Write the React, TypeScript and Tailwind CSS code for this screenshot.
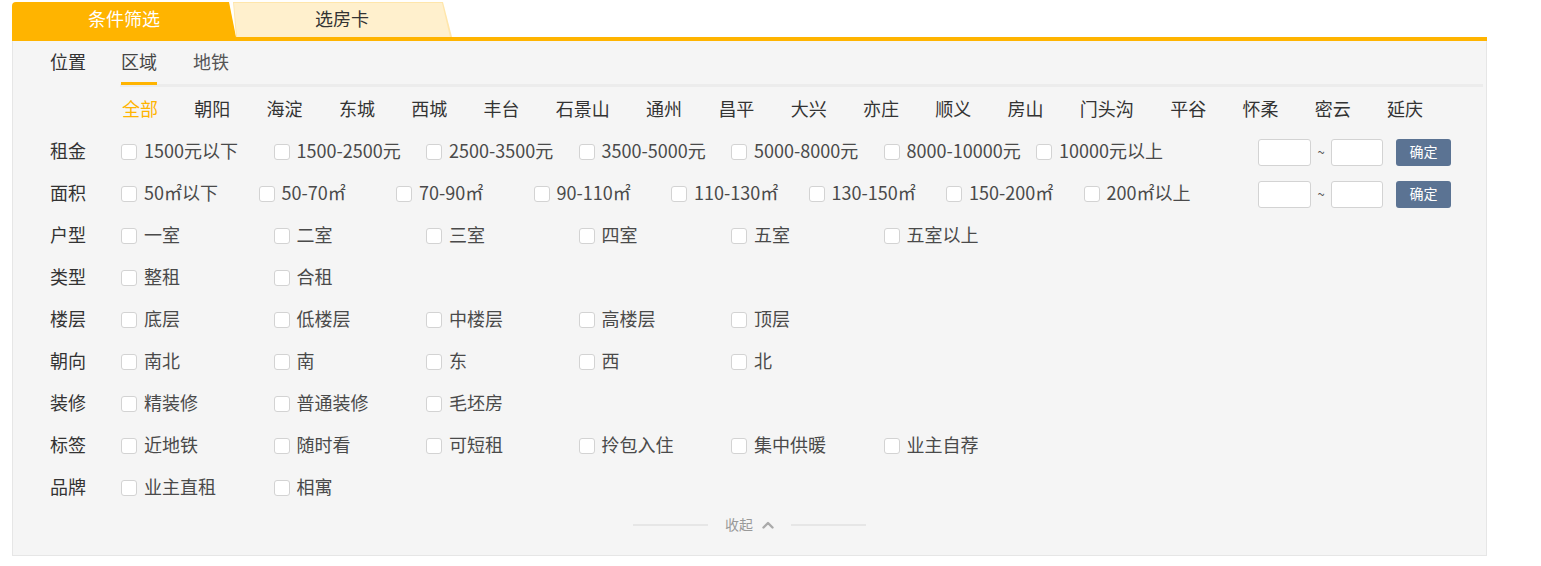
import React from "react";

const districts = ["全部","朝阳","海淀","东城","西城","丰台","石景山","通州","昌平","大兴","亦庄","顺义","房山","门头沟","平谷","怀柔","密云","延庆"];

type Row = { label: string; items: string[]; w: string; custom?: boolean };

const rows: Row[] = [
  { label: "租金", items: ["1500元以下","1500-2500元","2500-3500元","3500-5000元","5000-8000元","8000-10000元","10000元以上"], w: "w-[152.5px]", custom: true },
  { label: "面积", items: ["50㎡以下","50-70㎡","70-90㎡","90-110㎡","110-130㎡","130-150㎡","150-200㎡","200㎡以上"], w: "w-[137.5px]", custom: true },
  { label: "户型", items: ["一室","二室","三室","四室","五室","五室以上"], w: "w-[152.5px]" },
  { label: "类型", items: ["整租","合租"], w: "w-[152.5px]" },
  { label: "楼层", items: ["底层","低楼层","中楼层","高楼层","顶层"], w: "w-[152.5px]" },
  { label: "朝向", items: ["南北","南","东","西","北"], w: "w-[152.5px]" },
  { label: "装修", items: ["精装修","普通装修","毛坯房"], w: "w-[152.5px]" },
  { label: "标签", items: ["近地铁","随时看","可短租","拎包入住","集中供暖","业主自荐"], w: "w-[152.5px]" },
  { label: "品牌", items: ["业主直租","相寓"], w: "w-[152.5px]" },
];

export default function App() {
  return (
    <div className="w-[1541px] h-[566px] bg-white overflow-hidden text-[18px] text-[#333]" style={{ fontFamily: '"Noto Sans CJK SC", "Noto Sans", sans-serif' }}>
      <div className="ml-[12px] w-[1475px] pt-[2px]">
        {/* Tabs */}
        <div className="flex h-[35px]">
          <div className="w-[224px] h-[35px] bg-[#ffb400] rounded-tl-[4px] flex items-center justify-center text-white [clip-path:polygon(0_0,217px_0,224px_100%,0_100%)]">
            <span className="leading-[18px] pb-[3px]">条件筛选</span>
          </div>
          <div className="-ml-[4px] w-[220px] h-[35px] bg-[#ffe6ab] [clip-path:polygon(1px_0,211px_0,220px_100%,4px_100%)]">
            <div className="w-full h-full bg-[#fff0cd] flex items-center justify-center text-[#333] [clip-path:polygon(2px_1px,210px_1px,218px_100%,5px_100%)]">
              <span className="leading-[18px] pb-[3px]">选房卡</span>
            </div>
          </div>
        </div>
        <div className="h-[4px] bg-[#ffb400]" />
        {/* Panel */}
        <div className="bg-[#f5f5f5] border-x border-b border-[#e6e6e6] h-[515px] pl-[37px]">
          {/* Position row */}
          <div className="flex">
            <div className="w-[71px] h-[43px] flex items-center">
              <span className="leading-[18px] pb-[4px]">位置</span>
            </div>
            <div className="flex-1 flex flex-col">
              <div className="flex h-[43px] items-center">
                <div className="relative h-full flex items-center mr-[36px] text-[#444]">
                  <span className="leading-[18px] pb-[4px]">区域</span>
                  <span className="absolute left-0 right-0 bottom-[-1px] h-[3px] bg-[#ffb400]" />
                </div>
                <div className="h-full flex items-center text-[#555]">
                  <span className="leading-[18px] pb-[4px]">地铁</span>
                </div>
              </div>
              <div className="h-[3px] bg-[#ececec] mr-[3px] -ml-[1px]" />
            </div>
          </div>
          {/* Districts */}
          <div className="flex h-[44px] items-center pl-[72px]">
            {districts.map((d, i) => (
              <span key={d} className={"mr-[36.3px] leading-[18px] pb-[3px] " + (i === 0 ? "text-[#ffb400]" : "text-[#333]")}>{d}</span>
            ))}
          </div>
          {/* Checkbox rows */}
          {rows.map((r) => (
            <div key={r.label} className="flex h-[42px] items-center">
              <div className="w-[71px] text-[#333] leading-[18px] pb-[4px]">{r.label}</div>
              <div className="flex items-center">
                {r.items.map((it) => (
                  <div key={it} className={r.w + " flex items-center shrink-0"}>
                    <span className="w-[16px] h-[16px] rounded-[3px] border border-[#d3d3d3] bg-white shrink-0" />
                    <span className="ml-[7px] text-[#4a4a4a] whitespace-nowrap leading-[18px] pb-[4px]">{it}</span>
                  </div>
                ))}
              </div>
              {r.custom && (
                <div className="ml-auto mr-[35px] flex items-center">
                  <div className="w-[53px] h-[27px] bg-white border border-[#d3d3d3] rounded-[3px]" />
                  <span className="w-[20px] text-center text-[13px] text-[#555] leading-[13px] pb-[2px]">~</span>
                  <div className="w-[52px] h-[27px] bg-white border border-[#d3d3d3] rounded-[3px]" />
                  <button className="ml-[13px] w-[55px] h-[27px] rounded-[3px] bg-[#5b7393] text-white text-[14px] flex items-center justify-center">
                    <span className="leading-[14px] pb-[2px]">确定</span>
                  </button>
                </div>
              )}
            </div>
          ))}
          {/* Collapse */}
          <div className="h-[32px] flex items-center justify-center -ml-[37px]">
            <div className="w-[75px] h-[2px] bg-[#e6e6e6]" />
            <div className="mx-[17px] flex items-center text-[14px] text-[#999]">
              <span className="leading-[14px] pb-[2px]">收起</span>
              <svg className="ml-[9px]" width="12" height="8" viewBox="0 0 12 8">
                <polyline points="1.5,6.5 6,2 10.5,6.5" fill="none" stroke="#aaa" strokeWidth="2.4" strokeLinecap="round" strokeLinejoin="round" />
              </svg>
            </div>
            <div className="w-[75px] h-[2px] bg-[#e6e6e6]" />
          </div>
        </div>
      </div>
    </div>
  );
}
